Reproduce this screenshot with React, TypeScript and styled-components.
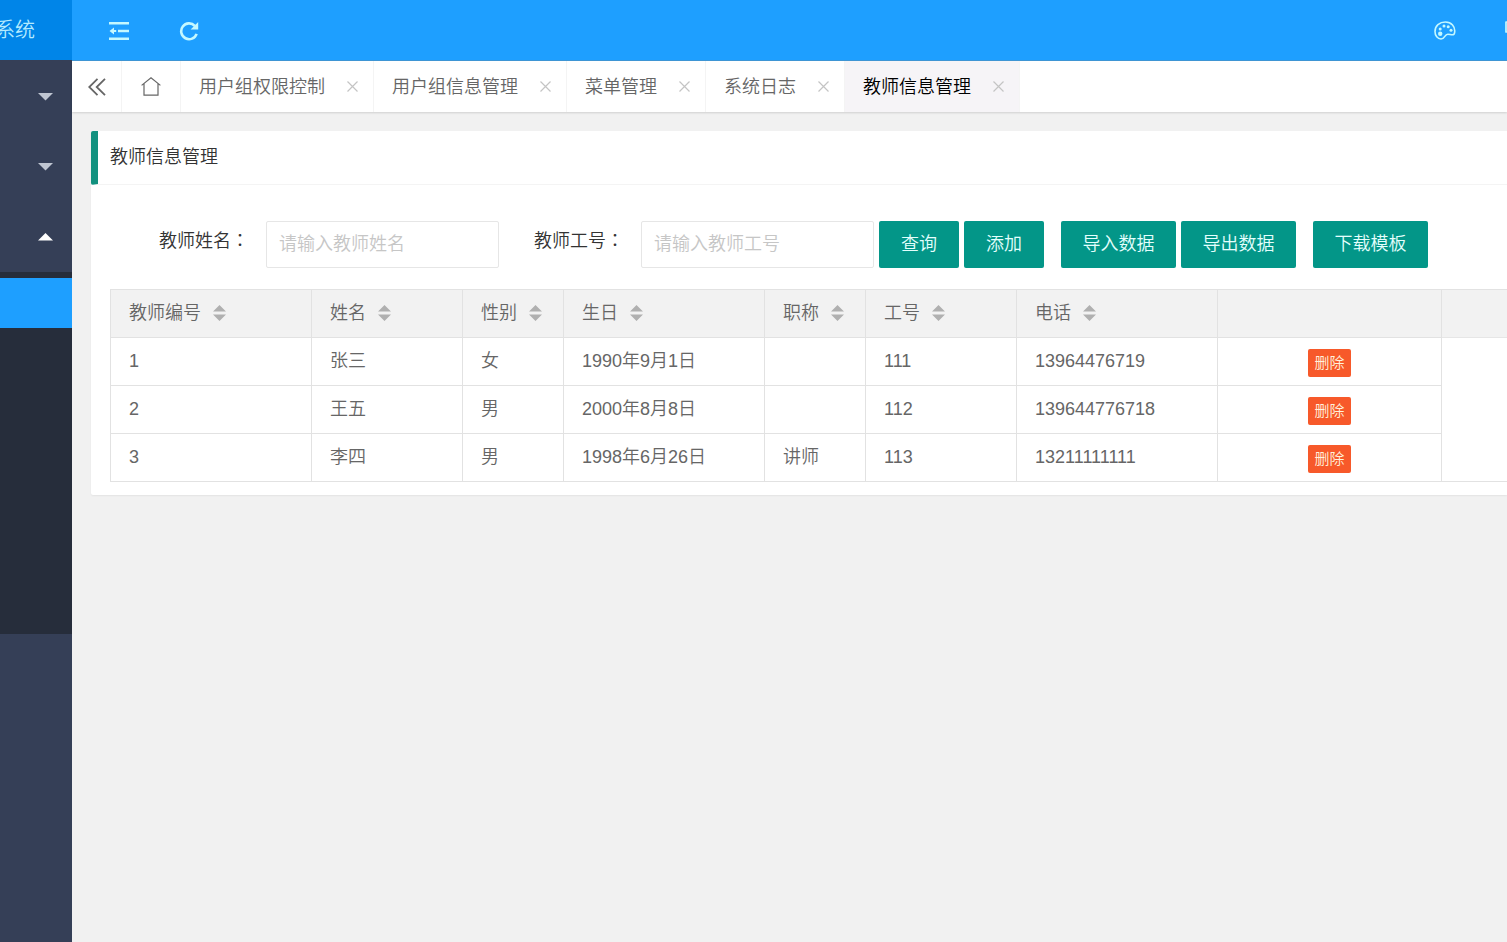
import React from "react";
import styled, { createGlobalStyle, css } from "styled-components";

const GlobalStyle = createGlobalStyle`
  *, *::before, *::after { box-sizing: border-box; }
  html, body { margin: 0; }
  body {
    background: #f1f1f1;
    color: #333;
    font: 350 18px/24px "Liberation Sans", "Noto Sans CJK SC", sans-serif;
    overflow-x: hidden;
  }
  button, input { font: inherit; }
  button { cursor: pointer; }
  a { color: inherit; text-decoration: none; }
`;

const Shell = styled.div`
  display: grid;
  grid-template-columns: 72px minmax(0, 1fr);
  min-height: 100vh;
`;

/* ---- side menu ---- */
const Side = styled.aside`
  background: #353f57;
`;

const Logo = styled.div`
  height: 60px;
  padding-right: 37px;
  display: flex;
  align-items: center;
  justify-content: flex-end;
  overflow: hidden;
  white-space: nowrap;
  background: #0085e8;
  color: #b4ebff;
  font-size: 20px;
`;

const MenuGroup = styled.button`
  display: flex;
  align-items: center;
  justify-content: flex-end;
  width: 100%;
  height: 70px;
  padding: 0 19px 0 0;
  border: 0;
  background: none;
`;

const MenuNav = styled.nav`
  padding-top: 2px;
`;

const SubMenu = styled.div`
  padding: 6px 0;
  background: #262d3b;
`;

const SubItem = styled.a<{ $active?: boolean }>`
  display: block;
  height: 50px;
  background: ${(p) => (p.$active ? "#1e9fff" : "transparent")};
`;

/* ---- top bar ---- */
const Main = styled.div`
  min-width: 0;
`;

const TopBar = styled.header`
  display: flex;
  justify-content: space-between;
  height: 61px;
  padding-left: 12px;
  background: #1e9fff;
  border-bottom: 1px solid #3f97d6;
  overflow: hidden;
`;

const ToolGroup = styled.div<{ $bleed?: boolean }>`
  display: flex;
  flex: none;
  margin-right: ${(p) => (p.$bleed ? "-43px" : "0")};
`;

const ToolButton = styled.button`
  display: flex;
  align-items: center;
  justify-content: center;
  width: 70px;
  height: 61px;
  padding: 0;
  border: 0;
  background: none;
  color: #c4f8ff;
`;

/* ---- page tabs ---- */
const TabBar = styled.nav`
  display: flex;
  height: 51px;
  background: #fff;
  box-shadow: 0 1px 2px rgba(0, 0, 0, 0.14);
`;

const tabCell = css`
  display: flex;
  align-items: center;
  border: 0;
  border-right: 1px solid #f4f4f4;
  background: none;
`;

const IconTab = styled.button<{ $width: number }>`
  ${tabCell}
  justify-content: center;
  width: ${(p) => p.$width}px;
  padding: 0;
  color: #666;
`;

const Tab = styled.div<{ $active?: boolean }>`
  ${tabCell}
  gap: 22px;
  padding: 0 15px 0 18px;
  white-space: nowrap;
  color: ${(p) => (p.$active ? "#000" : "#666")};
  background: ${(p) => (p.$active ? "#f6f4f7" : "transparent")};
`;

const CloseButton = styled.button`
  display: flex;
  padding: 0;
  border: 0;
  background: none;
  color: #c4c4c4;
`;

/* ---- card ---- */
const Content = styled.main`
  padding: 19px 0 19px 19px;
`;

const Card = styled.section`
  background: #fff;
  border-radius: 2px 0 0 2px;
  box-shadow: 0 1px 2px rgba(0, 0, 0, 0.06);
`;

const CardTitle = styled.h1`
  display: flex;
  align-items: center;
  height: 54px;
  margin: 0;
  padding: 0 0 2px 12px;
  border-left: 7px solid #12917f;
  border-bottom: 1px solid #f4f4f4;
  border-radius: 2px 0 0 2px;
  font-size: 18px;
  font-weight: inherit;
`;

const CardBody = styled.div`
  padding: 36px 0 13px 19px;
`;

const SearchForm = styled.form`
  display: flex;
  height: 47px;
  margin-bottom: 21px;
  padding-left: 49px;
`;

const Label = styled.label`
  flex: none;
  width: 107px;
  padding-top: 6px;
  white-space: nowrap;
`;

const Colon = styled.span`
  font-family: "Noto Sans CJK TC", sans-serif;
`;

const TextInput = styled.input`
  flex: none;
  width: 233px;
  margin-right: 35px;
  padding: 0 12px 2px;
  border: 1px solid #e6e6e6;
  border-radius: 2px;
  background: #fff;
  color: #333;
  outline: none;
  &::placeholder { color: #c6c6c6; opacity: 1; }
  &:last-of-type { margin-right: 5px; }
`;

const ButtonRow = styled.div`
  display: flex;
  gap: 17px;
`;

const ButtonPair = styled.div`
  display: flex;
  gap: 5px;
`;

const ActionButton = styled.button<{ $wide?: boolean }>`
  flex: none;
  width: ${(p) => (p.$wide ? 115 : 80)}px;
  padding: 0 0 2px;
  border: 0;
  border-radius: 2px;
  background: #039688;
  color: #e4fffd;
  white-space: nowrap;
`;

/* ---- data table ---- */
const TableFrame = styled.div`
  border: 1px solid #e2e2e2;
  border-right: 0;
  background: linear-gradient(#f2f2f2 47px, #e6e6e6 47px, #e6e6e6 48px, #fff 48px);
`;

const Table = styled.table`
  width: 1331px;
  table-layout: fixed;
  border-collapse: separate;
  border-spacing: 0;
`;

const cell = css`
  height: 48px;
  padding: 0 18px 2px;
  border-right: 1px solid #e2e2e2;
  border-bottom: 1px solid #e2e2e2;
  text-align: left;
  font-weight: inherit;
  white-space: nowrap;
  color: #666;
`;

const HeadCell = styled.th`
  ${cell}
`;

const HeadLabel = styled.span`
  display: flex;
  align-items: center;
  gap: 12px;
`;

const Row = styled.tr`
  &:last-child td { border-bottom: 0; height: 47px; }
`;

const Cell = styled.td<{ $center?: boolean }>`
  ${cell}
  ${(p) => p.$center && css`text-align: center; padding: 2px 0 0;`}
`;

const DeleteButton = styled.button`
  width: 43px;
  height: 28px;
  padding: 0;
  border: 0;
  border-radius: 2px;
  background: #f7592a;
  color: #fff2dc;
  font-size: 15px;
  line-height: 26px;
  vertical-align: middle;
`;

const Caret = ({ up }: { up?: boolean }) => (
  <svg width="15" height="8" viewBox="0 0 15 8" aria-hidden="true">
    <path d={up ? "M0 7.5 7.5 0 15 7.5z" : "M0 0h15L7.5 7.5z"} fill={up ? "#fff" : "#c0c6d2"} />
  </svg>
);

const SortIcon = () => (
  <svg width="13" height="16" viewBox="0 0 13 16" aria-hidden="true">
    <path d="M0 6.5 6.5 0 13 6.5zM0 9.5h13L6.5 16z" fill="#b0b0b0" />
  </svg>
);

const CloseIcon = () => (
  <svg width="11" height="11" viewBox="0 0 11 11" fill="none" stroke="currentColor" strokeWidth="1.2" aria-hidden="true">
    <path d="M.5.5l10 10M10.5.5l-10 10" />
  </svg>
);

const ShrinkIcon = () => (
  <svg width="20" height="18" viewBox="0 0 20 18" fill="currentColor" aria-hidden="true">
    <path d="M0 0h20v2.600H0zM9 7.700h11v2.600H9zM0 15.400h20v2.600H0zM.5 9l4.500-3.400v2.400h2.200v2H5v2.400z" />
  </svg>
);

const RefreshIcon = () => (
  <svg width="20" height="20" viewBox="0 0 20 20" aria-hidden="true">
    <path d="M15.8 4.8A7.900 7.900 0 1 0 17.600 12.800" fill="none" stroke="currentColor" strokeWidth="2.600" />
    <path d="M19.200 1v7.600h-7.600z" fill="currentColor" />
  </svg>
);

const PaletteIcon = () => (
  <svg width="22" height="19" viewBox="0 0 22 19" aria-hidden="true">
    <path
      d="M20.600 11.600C21.600 5.400 17.200 1 11.400 1 5.400 1 1 5 1 10.400c0 4.400 2.600 7.600 6 7.600 4.200 0 3.400-4.800 6.800-4.800 1.800 0 3 .7 4.600.6 1.300 0 2-.8 2.200-2.200z"
      fill="none" stroke="currentColor" strokeWidth="1.600"
    />
    <g fill="currentColor">
      <circle cx="6.200" cy="12.800" r="2.200" />
      <circle cx="6.200" cy="8" r="1.500" />
      <circle cx="10" cy="5" r="1.500" />
      <circle cx="14.200" cy="5.800" r="1.500" />
      <circle cx="17" cy="9.200" r="1.500" />
    </g>
  </svg>
);

const NoteIcon = () => (
  <svg width="20" height="20" viewBox="0 0 20 20" fill="none" stroke="currentColor" strokeWidth="1.700" aria-hidden="true">
    <path d="M1 1h18v10H9l-4 4v-4H1z" strokeLinejoin="round" />
  </svg>
);

const CollapseIcon = () => (
  <svg width="18" height="18" viewBox="0 0 18 18" fill="none" stroke="currentColor" strokeWidth="1.800" aria-hidden="true">
    <path d="M9.500.8 1.200 9l8.300 8.200M17 .8 8.700 9l8.300 8.200" />
  </svg>
);

const HomeIcon = () => (
  <svg width="20" height="19" viewBox="0 0 20 19" fill="none" stroke="currentColor" strokeWidth="1.200" aria-hidden="true">
    <path d="M.6 8.400 10 .8l9.400 7.600M3 6.800v11.400h14V6.800" />
  </svg>
);

const tabs = ["用户组权限控制", "用户组信息管理", "菜单管理", "系统日志", "教师信息管理"];

const columns = [
  { title: "教师编号", width: 201 },
  { title: "姓名", width: 151 },
  { title: "性别", width: 101 },
  { title: "生日", width: 201 },
  { title: "职称", width: 101 },
  { title: "工号", width: 151 },
  { title: "电话", width: 201 },
  { title: "", width: 224 },
];

const teachers = [
  ["1", "张三", "女", "1990年9月1日", "", "111", "13964476719"],
  ["2", "王五", "男", "2000年8月8日", "", "112", "139644776718"],
  ["3", "李四", "男", "1998年6月26日", "讲师", "113", "13211111111"],
];

export default function App() {
  return (
    <>
      <GlobalStyle />
      <Shell>
        <Side>
          <Logo>系统</Logo>
          <MenuNav>
            <MenuGroup aria-label="展开菜单"><Caret /></MenuGroup>
            <MenuGroup aria-label="展开菜单"><Caret /></MenuGroup>
            <MenuGroup aria-label="收起菜单"><Caret up /></MenuGroup>
            <SubMenu>
              {[0, 1, 2, 3, 4, 5, 6].map((i) => (
                <SubItem key={i} href="#" aria-label="菜单项" $active={i === 0} />
              ))}
            </SubMenu>
          </MenuNav>
        </Side>
        <Main>
          <TopBar>
            <ToolGroup>
              <ToolButton aria-label="侧边伸缩"><ShrinkIcon /></ToolButton>
              <ToolButton aria-label="刷新"><RefreshIcon /></ToolButton>
            </ToolGroup>
            <ToolGroup $bleed>
              <ToolButton aria-label="主题"><PaletteIcon /></ToolButton>
              <ToolButton aria-label="便签"><NoteIcon /></ToolButton>
            </ToolGroup>
          </TopBar>
          <TabBar>
            <IconTab $width={50} aria-label="向左"><CollapseIcon /></IconTab>
            <IconTab $width={59} aria-label="主页"><HomeIcon /></IconTab>
            {tabs.map((name, i) => (
              <Tab key={name} $active={i === tabs.length - 1}>
                <a href="#">{name}</a>
                <CloseButton aria-label="关闭"><CloseIcon /></CloseButton>
              </Tab>
            ))}
          </TabBar>
          <Content>
            <Card>
              <CardTitle>教师信息管理</CardTitle>
              <CardBody>
                <SearchForm onSubmit={(e) => e.preventDefault()}>
                  <Label htmlFor="name">教师姓名<Colon>：</Colon></Label>
                  <TextInput id="name" placeholder="请输入教师姓名" />
                  <Label htmlFor="code">教师工号<Colon>：</Colon></Label>
                  <TextInput id="code" placeholder="请输入教师工号" />
                  <ButtonRow>
                    <ButtonPair>
                      <ActionButton type="submit">查询</ActionButton>
                      <ActionButton type="button">添加</ActionButton>
                    </ButtonPair>
                    <ButtonPair>
                      <ActionButton type="button" $wide>导入数据</ActionButton>
                      <ActionButton type="button" $wide>导出数据</ActionButton>
                    </ButtonPair>
                    <ActionButton type="button" $wide>下载模板</ActionButton>
                  </ButtonRow>
                </SearchForm>
                <TableFrame>
                  <Table>
                    <colgroup>
                      {columns.map((c, i) => <col key={i} width={c.width} />)}
                    </colgroup>
                    <thead>
                      <tr>
                        {columns.map((c, i) => (
                          <HeadCell key={i} scope="col">
                            {c.title && <HeadLabel>{c.title}<SortIcon /></HeadLabel>}
                          </HeadCell>
                        ))}
                      </tr>
                    </thead>
                    <tbody>
                      {teachers.map((t) => (
                        <Row key={t[0]}>
                          {t.map((v, i) => <Cell key={i}>{v}</Cell>)}
                          <Cell $center><DeleteButton>删除</DeleteButton></Cell>
                        </Row>
                      ))}
                    </tbody>
                  </Table>
                </TableFrame>
              </CardBody>
            </Card>
          </Content>
        </Main>
      </Shell>
    </>
  );
}
